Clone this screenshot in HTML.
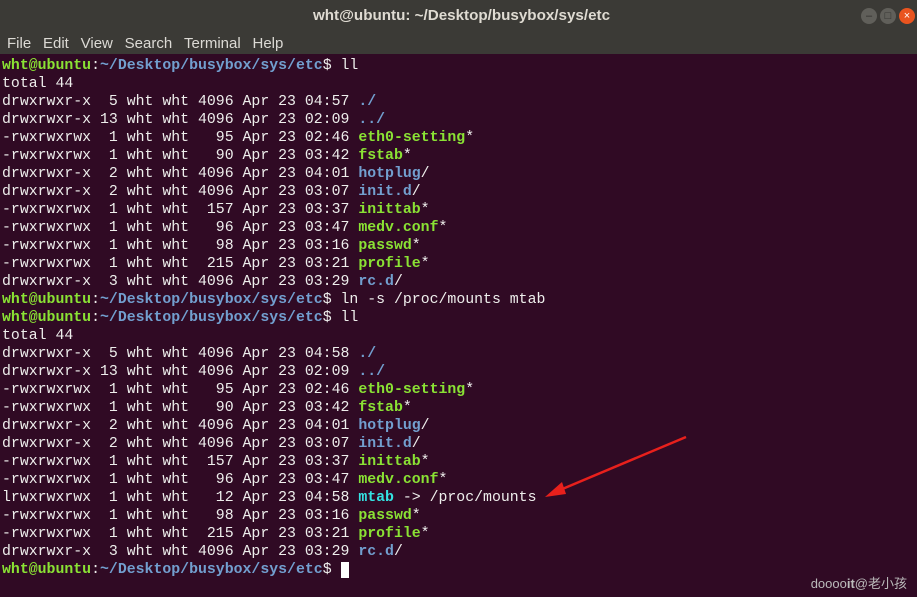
<!DOCTYPE html><html><head><meta charset="utf-8"><style>
body{margin:0;width:917px;height:597px;overflow:hidden;background:#300a24;font-family:"Liberation Sans",sans-serif}
.top{position:absolute;left:0;top:0;width:917px;height:54px;background:#3b3a36}
.title{position:absolute;top:7px;left:3px;width:917px;text-align:center;color:#dfdbd2;font-weight:bold;font-size:15.2px}
.menu{position:absolute;top:35px;left:7px;color:#dcdad5;font-size:15px}
.menu span{margin-right:11.8px}
.btn{position:absolute;top:8px;width:16px;height:16px;border-radius:50%;background:#605f5a;color:#2e2e2b;font-size:11px;line-height:16px;text-align:center}
pre{position:absolute;left:2px;top:57px;margin:0;font-family:"Liberation Mono",monospace;font-size:14.85px;line-height:18px;color:#eeeeec}
.g{color:#8ae234;font-weight:bold}.b{color:#729fcf;font-weight:bold}.c{color:#34e2e2;font-weight:bold}
.wm{position:absolute;right:10px;bottom:5px;color:#bbb;font-size:13px;font-family:"Liberation Sans","Noto Sans CJK SC",sans-serif}
</style></head><body>
<div class="top"><div class="title">wht@ubuntu: ~/Desktop/busybox/sys/etc</div>
<div class="menu"><span>File</span><span>Edit</span><span>View</span><span>Search</span><span>Terminal</span><span>Help</span></div>
<div class="btn" style="left:861px">–</div><div class="btn" style="left:880px">□</div><div class="btn" style="left:899px;background:#e9541f;color:#fff">×</div></div>
<pre><span class="g">wht@ubuntu</span>:<span class="b">~/Desktop/busybox/sys/etc</span>$ ll
total 44
drwxrwxr-x  5 wht wht 4096 Apr 23 04:57 <span class="b">./</span>
drwxrwxr-x 13 wht wht 4096 Apr 23 02:09 <span class="b">../</span>
-rwxrwxrwx  1 wht wht   95 Apr 23 02:46 <span class="g">eth0-setting</span>*
-rwxrwxrwx  1 wht wht   90 Apr 23 03:42 <span class="g">fstab</span>*
drwxrwxr-x  2 wht wht 4096 Apr 23 04:01 <span class="b">hotplug</span>/
drwxrwxr-x  2 wht wht 4096 Apr 23 03:07 <span class="b">init.d</span>/
-rwxrwxrwx  1 wht wht  157 Apr 23 03:37 <span class="g">inittab</span>*
-rwxrwxrwx  1 wht wht   96 Apr 23 03:47 <span class="g">medv.conf</span>*
-rwxrwxrwx  1 wht wht   98 Apr 23 03:16 <span class="g">passwd</span>*
-rwxrwxrwx  1 wht wht  215 Apr 23 03:21 <span class="g">profile</span>*
drwxrwxr-x  3 wht wht 4096 Apr 23 03:29 <span class="b">rc.d</span>/
<span class="g">wht@ubuntu</span>:<span class="b">~/Desktop/busybox/sys/etc</span>$ ln -s /proc/mounts mtab
<span class="g">wht@ubuntu</span>:<span class="b">~/Desktop/busybox/sys/etc</span>$ ll
total 44
drwxrwxr-x  5 wht wht 4096 Apr 23 04:58 <span class="b">./</span>
drwxrwxr-x 13 wht wht 4096 Apr 23 02:09 <span class="b">../</span>
-rwxrwxrwx  1 wht wht   95 Apr 23 02:46 <span class="g">eth0-setting</span>*
-rwxrwxrwx  1 wht wht   90 Apr 23 03:42 <span class="g">fstab</span>*
drwxrwxr-x  2 wht wht 4096 Apr 23 04:01 <span class="b">hotplug</span>/
drwxrwxr-x  2 wht wht 4096 Apr 23 03:07 <span class="b">init.d</span>/
-rwxrwxrwx  1 wht wht  157 Apr 23 03:37 <span class="g">inittab</span>*
-rwxrwxrwx  1 wht wht   96 Apr 23 03:47 <span class="g">medv.conf</span>*
lrwxrwxrwx  1 wht wht   12 Apr 23 04:58 <span class="c">mtab</span> -&gt; /proc/mounts
-rwxrwxrwx  1 wht wht   98 Apr 23 03:16 <span class="g">passwd</span>*
-rwxrwxrwx  1 wht wht  215 Apr 23 03:21 <span class="g">profile</span>*
drwxrwxr-x  3 wht wht 4096 Apr 23 03:29 <span class="b">rc.d</span>/
<span class="g">wht@ubuntu</span>:<span class="b">~/Desktop/busybox/sys/etc</span>$ <span style="background:#fff">&nbsp;</span></pre>
<svg style="position:absolute;left:0;top:0" width="917" height="597"><line x1="686" y1="437" x2="560" y2="490" stroke="#e8201c" stroke-width="2.5"/><polygon points="545,497 562,482 566,494" fill="#e8201c"/></svg>
<div class="wm">doooo<b>it</b>@老小孩</div>
</body></html>
